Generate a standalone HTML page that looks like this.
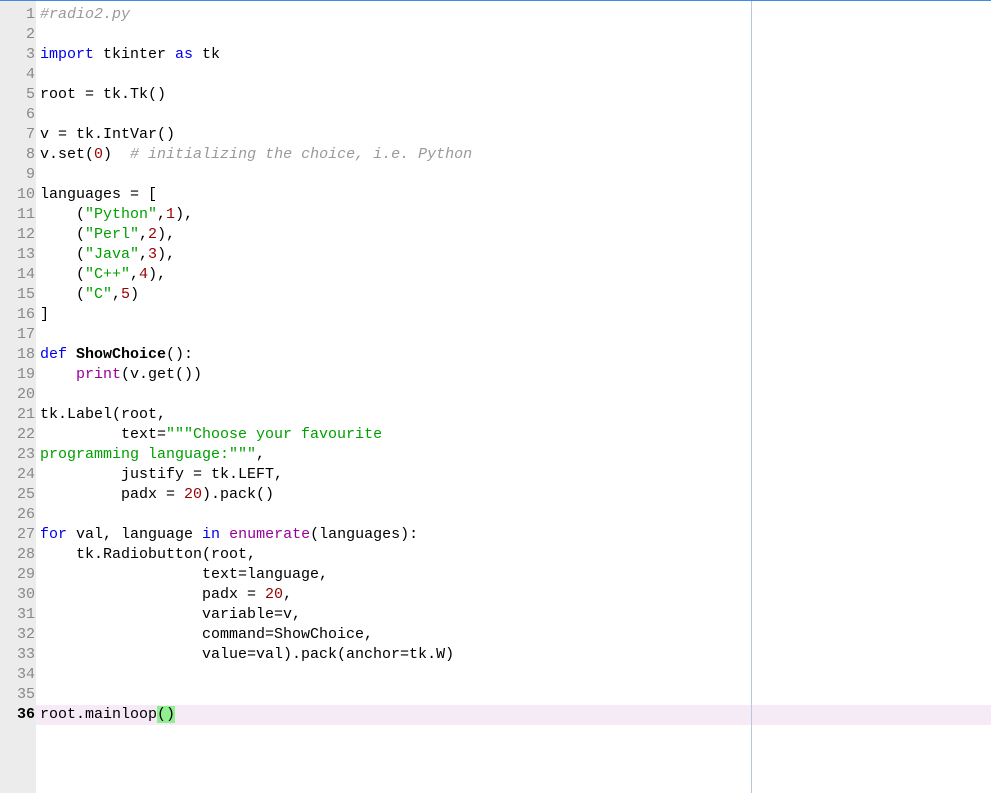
<!DOCTYPE html>
<html><head><meta charset="utf-8"><style>
body{margin:0;width:991px;height:793px;background:#fff;overflow:hidden;position:relative;font-family:"Liberation Mono",monospace;font-size:15px}
#top{position:absolute;left:0;top:0;width:991px;height:1px;background:#3c8ee0}
#gut{position:absolute;left:0;top:1px;width:36px;height:792px;background:#ececec}
#vl{position:absolute;left:751px;top:1px;width:1px;height:792px;background:#b8c8d8}
#hl{position:absolute;left:36px;top:705px;width:955px;height:20px;background:#f6eaf6}
.l{position:absolute;left:0;height:20px;line-height:20px;white-space:pre;color:#000}
.n{display:inline-block;width:35px;text-align:right;color:#888;margin-right:5px}
.k{color:#0000ee}.c{color:#999;font-style:italic}.s{color:#00a000}.d{color:#990000}.p{color:#990099}.b{font-weight:bold}
.m{background:#90f090}
</style></head><body>
<div id="top"></div><div id="gut"></div><div id="hl"></div><div id="vl"></div>
<div class="l" style="top:5px"><span class="n">1</span><span class="c">#radio2.py</span></div>
<div class="l" style="top:25px"><span class="n">2</span></div>
<div class="l" style="top:45px"><span class="n">3</span><span class="k">import</span> tkinter <span class="k">as</span> tk</div>
<div class="l" style="top:65px"><span class="n">4</span></div>
<div class="l" style="top:85px"><span class="n">5</span>root = tk.Tk()</div>
<div class="l" style="top:105px"><span class="n">6</span></div>
<div class="l" style="top:125px"><span class="n">7</span>v = tk.IntVar()</div>
<div class="l" style="top:145px"><span class="n">8</span>v.set(<span class="d">0</span>)  <span class="c"># initializing the choice, i.e. Python</span></div>
<div class="l" style="top:165px"><span class="n">9</span></div>
<div class="l" style="top:185px"><span class="n">10</span>languages = [</div>
<div class="l" style="top:205px"><span class="n">11</span>    (<span class="s">"Python"</span>,<span class="d">1</span>),</div>
<div class="l" style="top:225px"><span class="n">12</span>    (<span class="s">"Perl"</span>,<span class="d">2</span>),</div>
<div class="l" style="top:245px"><span class="n">13</span>    (<span class="s">"Java"</span>,<span class="d">3</span>),</div>
<div class="l" style="top:265px"><span class="n">14</span>    (<span class="s">"C++"</span>,<span class="d">4</span>),</div>
<div class="l" style="top:285px"><span class="n">15</span>    (<span class="s">"C"</span>,<span class="d">5</span>)</div>
<div class="l" style="top:305px"><span class="n">16</span>]</div>
<div class="l" style="top:325px"><span class="n">17</span></div>
<div class="l" style="top:345px"><span class="n">18</span><span class="k">def</span> <span class="b">ShowChoice</span>():</div>
<div class="l" style="top:365px"><span class="n">19</span>    <span class="p">print</span>(v.get())</div>
<div class="l" style="top:385px"><span class="n">20</span></div>
<div class="l" style="top:405px"><span class="n">21</span>tk.Label(root,</div>
<div class="l" style="top:425px"><span class="n">22</span>         text=<span class="s">"""Choose your favourite</span></div>
<div class="l" style="top:445px"><span class="n">23</span><span class="s">programming language:"""</span>,</div>
<div class="l" style="top:465px"><span class="n">24</span>         justify = tk.LEFT,</div>
<div class="l" style="top:485px"><span class="n">25</span>         padx = <span class="d">20</span>).pack()</div>
<div class="l" style="top:505px"><span class="n">26</span></div>
<div class="l" style="top:525px"><span class="n">27</span><span class="k">for</span> val, language <span class="k">in</span> <span class="p">enumerate</span>(languages):</div>
<div class="l" style="top:545px"><span class="n">28</span>    tk.Radiobutton(root,</div>
<div class="l" style="top:565px"><span class="n">29</span>                  text=language,</div>
<div class="l" style="top:585px"><span class="n">30</span>                  padx = <span class="d">20</span>,</div>
<div class="l" style="top:605px"><span class="n">31</span>                  variable=v,</div>
<div class="l" style="top:625px"><span class="n">32</span>                  command=ShowChoice,</div>
<div class="l" style="top:645px"><span class="n">33</span>                  value=val).pack(anchor=tk.W)</div>
<div class="l" style="top:665px"><span class="n">34</span></div>
<div class="l" style="top:685px"><span class="n">35</span></div>
<div class="l" style="top:705px"><span class="n" style="color:#000;font-weight:bold">36</span>root.mainloop<span class="m">()</span></div>
</body></html>
